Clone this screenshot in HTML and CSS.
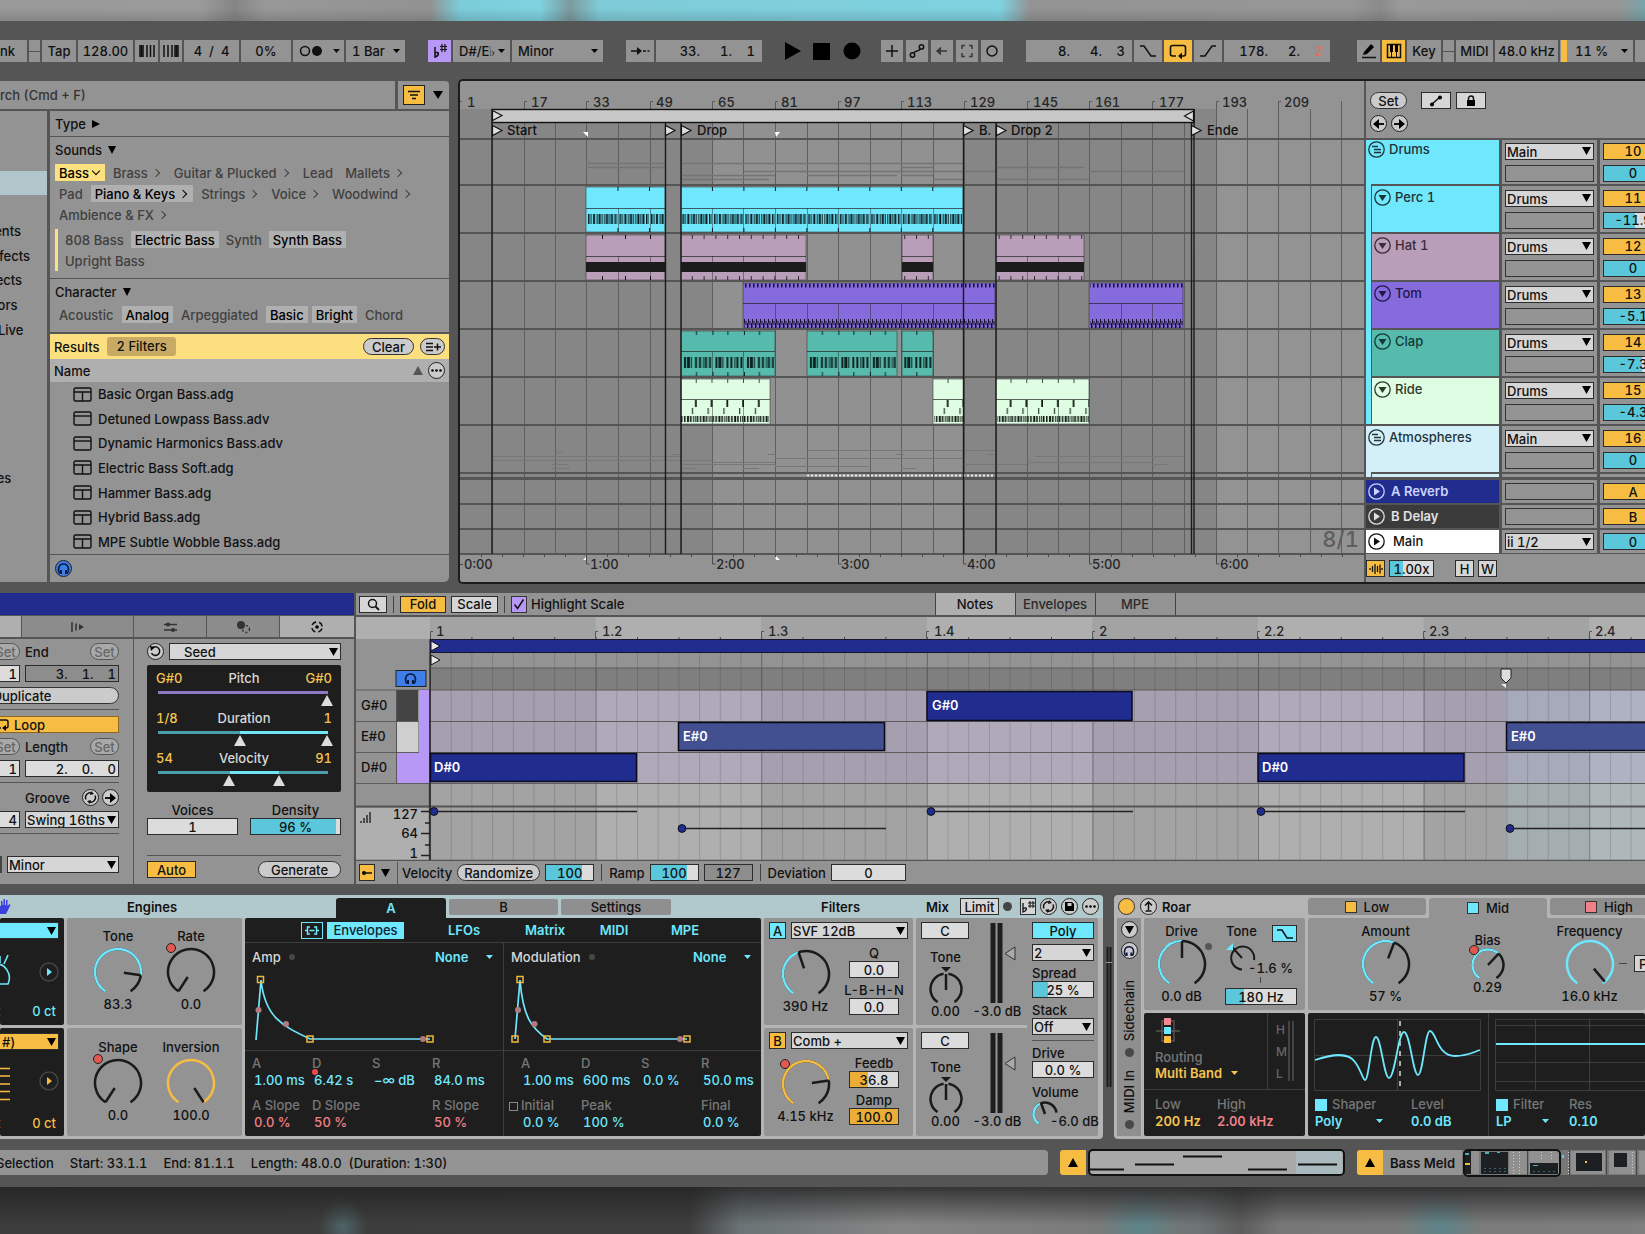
FILE: index.html
```html
<!DOCTYPE html>
<html lang="en">
<head>
<meta charset="utf-8">
<title>Live Set</title>
<link rel="stylesheet" href="styles.css">
</head>
<body>
<div class="glow-top"></div>
<main class="app">

<header class="transport">
  <div class="group">
    <button class="t cut-l w27">nk</button>
    <span class="t w11 link"></span>
    <button class="t w34">Tap</button>
    <input class="t w55" value="128.00" aria-label="Tempo">
    <button class="t w23" aria-label="Nudge down"><svg width="16" height="14"><path d="M1 1v12M4 1v12M8 1v12M11.500 1v12M15 1v12" stroke="#111" stroke-width="1.500"/><path d="M2.500 1v12" stroke="#111" stroke-width="2"/></svg></button>
    <button class="t w22" aria-label="Nudge up"><svg width="16" height="14"><path d="M1 1v12M5 1v12M9 1v12M12 1v12M15 1v12" stroke="#111" stroke-width="1.500"/><path d="M13.500 1v12" stroke="#111" stroke-width="2"/></svg></button>
    <input class="t w55" value="4  /  4" aria-label="Time signature">
    <input class="t w50" value="0%" aria-label="Groove amount">
    <button class="t w51" aria-label="Metronome"><svg width="43" height="14"><circle cx="8" cy="7" r="4.500" fill="none" stroke="#111" stroke-width="1.500"/><circle cx="20" cy="7" r="5" fill="#111"/><path d="M36 5h7l-3.500 4z" fill="#111"/></svg></button>
    <select class="t sel-s w59" aria-label="Quantization"><option>1 Bar</option></select>
  </div>
  <div class="group">
    <button class="t w23 violet" aria-label="Scale mode"><svg width="16" height="16"><path d="M3 4v10c5-2 4-6 0-4" fill="none" stroke="#111" stroke-width="1.500"/><path d="M10 1v8M13 1v8M8 3.500h7M8 6.500h7" stroke="#111" stroke-width="1.200"/></svg></button>
    <select class="t sel-s w57" aria-label="Root note"><option>D#/E♭</option></select>
    <select class="t sel-s w91" aria-label="Scale"><option>Minor</option></select>
  </div>
  <div class="group">
    <button class="t w28" aria-label="Follow"><svg width="20" height="12"><path d="M1 6h7M13 6h3M17.500 6h2" stroke="#111" stroke-width="1.500"/><path d="M7 2l5 4-5 4z" fill="#111"/></svg></button>
    <div class="t pos"><span>33.</span><span>1.</span><span>1</span></div>
  </div>
  <div class="play">
    <button aria-label="Play"><svg width="17" height="20"><path d="M1 1l16 9L1 19z"/></svg></button>
    <button aria-label="Stop"><svg width="18" height="18"><path d="M0 1h17v17H0z"/></svg></button>
    <button aria-label="Record"><svg width="18" height="18"><circle cx="9" cy="9" r="8.500"/></svg></button>
  </div>
  <div class="group g3">
    <button class="t w22" aria-label="Overdub"><svg width="14" height="14"><path d="M7 1v12M1 7h12" stroke="#111" stroke-width="1.500"/></svg></button>
    <button class="t w22" aria-label="Automation arm"><svg width="16" height="14"><g fill="none" stroke="#111" stroke-width="1.500"><circle cx="3.500" cy="11" r="2.200"/><circle cx="12.500" cy="3" r="2.200"/><path d="M5 9c1-3 5-1 6-4"/></g></svg></button>
    <button class="t w22" aria-label="Re-enable automation"><svg width="14" height="14"><path d="M2 7h10M6 3.500L2 7l4 3.500" fill="none" stroke="#3a3a3a" stroke-width="1.500"/><path d="M6 3v8L2 7z" fill="#3a3a3a"/></svg></button>
    <button class="t w22" aria-label="Capture"><svg width="14" height="14"><path d="M2 5V1.500h3M9 1.500h3V5M12 9v3.500H9M5 12.500H2V9" fill="none" stroke="#3a3a3a" stroke-width="1.500"/></svg></button>
    <button class="t w22" aria-label="Session record"><svg width="14" height="14"><circle cx="7" cy="7" r="5" fill="none" stroke="#111" stroke-width="1.500"/></svg></button>
  </div>
  <div class="group">
    <div class="t pos"><span>8.</span><span>4.</span><span>3</span></div>
    <button class="t w28" aria-label="Punch in"><svg width="18" height="14"><path d="M1 2h4l7 10h5" fill="none" stroke="#111" stroke-width="1.500"/></svg></button>
    <button class="t w28 amber" aria-label="Loop"><svg width="18" height="15"><path d="M7 12H3.500q-2 0-2-2V3.500q0-2 2-2h11q2 0 2 2V10q0 2-2 2H12" fill="none" stroke="#111" stroke-width="1.600"/><path d="M13 8.500v7L9 12z" fill="#111"/></svg></button>
    <button class="t w28" aria-label="Punch out"><svg width="18" height="14"><path d="M1 12h5L13 2h4" fill="none" stroke="#111" stroke-width="1.500"/></svg></button>
    <div class="t pos"><span>178.</span><span>2.</span><span class="red">2</span></div>
  </div>
  <div class="group last">
    <button class="t w23" aria-label="Draw"><svg width="16" height="16"><path d="M3 9l7-8 3 3-7 7-4 1z"/><path d="M1 14.500h14" stroke="#111" stroke-width="1.500"/></svg></button>
    <button class="t w23 amber" aria-label="Computer keyboard"><svg width="16" height="16"><path d="M1.500 1.500h13v13h-13z" fill="none" stroke="#111" stroke-width="1.500"/><path d="M5.500 2v12M10.500 2v12" stroke="#111"/><path d="M4 2h3v7H4zM9 2h3v7H9z"/></svg></button>
    <button class="t w34">Key</button>
    <span class="t w11 link"></span>
    <button class="t w37">MIDI</button>
    <button class="t w63">48.0 kHz</button>
    <select class="t sel-s w73 cpu" aria-label="CPU"><option>11 %</option></select>
    <span class="t w22"></span>
  </div>
</header>

<div class="upper">
<section class="browser">
  <div class="search">
    <input value="" placeholder="rch (Cmd + F)" aria-label="Search">
    <div class="filter-box">
      <button class="filter" aria-label="Filters"><svg width="14" height="12"><path d="M1 2.500h12M3 6h8M5 9.500h4" stroke="#111" stroke-width="1.600"/></svg></button>
      <svg width="10" height="8"><path d="M0 0h10L5 8z"/></svg>
    </div>
  </div>
  <div class="browser-body">
    <nav class="side">
      <div class="hl"></div>
      <ul><li>Instruments</li><li>Audio Effects</li><li>MIDI Effects</li><li>Modulators</li><li>Max for Live</li></ul>
      <ul class="u2"><li>Templates</li></ul>
    </nav>
    <div class="content">
      <h3 class="type">Type <svg width="8" height="8"><path d="M0 0l8 4-8 4z"/></svg></h3>
      <div class="tags">
        <h3>Sounds <svg width="8" height="8"><path d="M0 0h8L4 8z"/></svg></h3>
        <div class="row"><button class="yel">Bass<i class="dn"></i></button><button>Brass<i></i></button><button>Guitar &amp; Plucked<i></i></button><button>Lead</button><button>Mallets<i></i></button></div>
        <div class="row"><button>Pad</button><button class="on">Piano &amp; Keys<i></i></button><button>Strings<i></i></button><button>Voice<i></i></button><button>Woodwind<i></i></button></div>
        <div class="row"><button>Ambience &amp; FX<i></i></button></div>
        <div class="sub">
          <div class="row"><button>808 Bass</button><button class="on">Electric Bass</button><button>Synth</button><button class="on">Synth Bass</button></div>
          <div class="row"><button>Upright Bass</button></div>
        </div>
      </div>
      <div class="tags char">
        <h3>Character <svg width="8" height="8"><path d="M0 0h8L4 8z"/></svg></h3>
        <div class="row"><button>Acoustic</button><button class="on">Analog</button><button>Arpeggiated</button><button class="on">Basic</button><button class="on">Bright</button><button>Chord</button></div>
      </div>
      <div class="results"><span>Results</span><span class="count">2 Filters</span><button class="pill push w51">Clear</button><button class="pill w25" aria-label="Save filter"><svg width="16" height="10"><path d="M1 1.500h7M1 5h7M1 8.500h7M9 5h7M12.500 1.500v7" stroke="#111" stroke-width="1.500"/></svg></button></div>
      <div class="name"><span>Name</span><svg class="push" width="10" height="9"><path d="M0 9h10L5 0z" fill="#555"/></svg><button class="round" aria-label="Columns"><svg width="11" height="3"><circle cx="1.500" cy="1.500" r="1.300"/><circle cx="5.500" cy="1.500" r="1.300"/><circle cx="9.500" cy="1.500" r="1.300"/></svg></button></div>
      <ul class="files">
        <li><svg width="19" height="15"><use href="#rack"/></svg>Basic Organ Bass.adg</li>
        <li><svg width="19" height="15"><use href="#dev"/></svg>Detuned Lowpass Bass.adv</li>
        <li><svg width="19" height="15"><use href="#dev"/></svg>Dynamic Harmonics Bass.adv</li>
        <li><svg width="19" height="15"><use href="#rack"/></svg>Electric Bass Soft.adg</li>
        <li><svg width="19" height="15"><use href="#rack"/></svg>Hammer Bass.adg</li>
        <li><svg width="19" height="15"><use href="#rack"/></svg>Hybrid Bass.adg</li>
        <li><svg width="19" height="15"><use href="#rack"/></svg>MPE Subtle Wobble Bass.adg</li>
      </ul>
      <div class="preview"><button class="round blue" aria-label="Preview"><svg width="13" height="13"><use href="#phones"/></svg></button></div>
    </div>
  </div>
</section>

<section class="arr">
<svg class="timeline" width="904" height="501" viewBox="460 81 904 501">
  <defs>
    <g id="rack"><rect x="1" y="1" width="17" height="13" rx="1.500" fill="none" stroke="#111" stroke-width="1.400"/><path d="M1 5h17M9.500 5v9" stroke="#111" stroke-width="1.400"/></g>
    <g id="dev"><rect x="1" y="1" width="17" height="13" rx="1.500" fill="none" stroke="#111" stroke-width="1.400"/><path d="M1 5h17" stroke="#111" stroke-width="1.400"/></g>
    <g id="phones"><path d="M3 11.500C.500 9 1 2 6.500 2S12.500 9 10 11.500" fill="none" stroke="#0b1b3d" stroke-width="1.600"/><path d="M3 8h2v4H3zM8 8h2v4H8z" fill="#0b1b3d"/></g>
    <g id="loc"><path d="M.500.500v10L10 5.500z" fill="#ddd" stroke="#111" stroke-width="1.200"/></g>
    <pattern id="perc" patternUnits="userSpaceOnUse" x="586" y="0" width="31.480" height="600"><path d="M2 214h1.500v10H2zM4.500 214h1v10h-1zM7 214h2v10H7zM10.500 214h1v10h-1zM12.500 214h2v10h-2zM15.500 214h1v10h-1zM18 214h1v10h-1zM20 214h2v10h-2zM23 214h1v10h-1zM25 214h2v10h-2zM28.500 214h1v10h-1zM30 214h1v10h-1zM0 187h1v4H0zM0 228h1v4H0z" fill="#0a1c20"/></pattern>
    <pattern id="hat" patternUnits="userSpaceOnUse" x="681" y="0" width="11.800" height="600"><path d="M11 235h1v4h-1zM11 276h1v4h-1z" fill="#111"/></pattern>
    <pattern id="tom" patternUnits="userSpaceOnUse" x="743" y="0" width="4" height="600"><path d="M2 283.500h1.500v4H2zM1 319h1v4H1zM0 323h1.500v5H0zM2.500 321h1v4h-1z" fill="#15102c"/></pattern>
    <pattern id="clap" patternUnits="userSpaceOnUse" x="681" y="0" width="31.480" height="600"><path d="M3 357h2v11H3zM6 357h3v11H6zM10 357h1v11h-1zM14 357h2v11h-2zM18 357h2v11h-2zM22 357h1v11h-1zM24 357h2v11h-2zM28 357h2v11h-2zM15 331h1v4h-1zM0 331h1v4H0zM15 372h1v4h-1zM0 372h1v4H0z" fill="#0c2320"/></pattern>
    <pattern id="ride" patternUnits="userSpaceOnUse" x="681" y="0" width="15.740" height="600"><path d="M14 400h2v7h-2zM11 408h1v6h-1zM15 379h1v4h-1zM0 416h1.500v6H0zM3 416h1.500v6H3zM6 416h2v6H6zM9 416h1.500v6H9zM12 416h1v6h-1zM14 416h1v6h-1z" fill="#0d150e"/></pattern>
    <pattern id="dots" patternUnits="userSpaceOnUse" x="807" y="0" width="4" height="600"><path d="M0 474.500h2v2H0z" fill="#e2ecee"/></pattern>
  </defs>
  <rect x="460" y="81" width="904" height="501" fill="#939393"/>
  <rect x="460" y="109" width="252" height="444" fill="#868686"/><rect x="712" y="122" width="252" height="431" fill="#919191"/><rect x="964" y="109" width="252" height="444" fill="#868686"/>
  <path stroke="#5f5f5f" d="M492.500 122V553M524.500 122V553M555.500 122V553M586.500 122V553M618.500 122V553M650.500 122V553M681.500 122V553M712.500 122V553M743.500 122V553M775.500 122V553M807.500 122V553M838.500 122V553M870.500 122V553M901.500 122V553M933.500 122V553M964.500 122V553M996.500 122V553M1027.500 122V553M1058.500 122V553M1089.500 122V553M1121.500 122V553M1152.500 122V553M1184.500 122V553M1216.500 109V553M1247.500 109V553M1278.500 109V553M1310.500 109V553M1341.500 101V553"/>
  <path stroke="#5a5a5a" fill="none" d="M462 101.500h-2M527 101.500h-2.500V109M589 101.500h-2.500V109M653 101.500h-2.500V109M715 101.500h-2.500V109M778 101.500h-2.500V109M841 101.500h-2.500V109M904 101.500h-2.500V109M967 101.500h-2.500V109M1030 101.500h-2.500V109M1092 101.500h-2.500V109M1155 101.500h-2.500V109M1219 101.500h-2.500V109M1281 101.500h-2.500V109"/>
  <path stroke="#747474" stroke-width="1.500" d="M586 163.500h79M681 163.500h126M586 167.500h79M681 163.500h282M901 167.500h32M744 171.500h252M681 175.500h94M807 175.500h90M901 175.500h32M681 179.500h88M933 179.500h31M996 167.500h88M996 179.500h93M1089 171.500h95"/>
  <path stroke="#777" d="M492 456.500h190M492 460.500h220M555 452.500h8M552 464.500h16M552 468.500h18M681 464.500h95M681 468.500h15M712 462.500h63M775 458.500h190M807 450.500h188M775 466.500h94M964 464.500h63M1035 456.500h149M1027 462.500h125M1152 464.500h15M743 468.500h16M901 468.500h15M768 454.500h8M896 454.500h8M988 454.500h8M672 454.500h9"/>
  <g stroke="#3a3a3a" stroke-opacity=".6">
    <g fill="#6fe7fc"><rect x="586" y="187" width="79" height="45"/><rect x="681" y="187" width="282" height="45"/></g>
    <g fill="#b99eb9"><rect x="586" y="235" width="79" height="45"/><rect x="681" y="235" width="125" height="45"/><rect x="902" y="235" width="31" height="45"/><rect x="996" y="235" width="88" height="45"/></g>
    <g fill="#856bdb"><rect x="743" y="283" width="252" height="45"/><rect x="1089" y="283" width="94" height="45"/></g>
    <g fill="#56bbad"><rect x="681" y="331" width="94" height="45"/><rect x="807" y="331" width="90" height="45"/><rect x="902" y="331" width="31" height="45"/></g>
    <g fill="#dffde3"><rect x="681" y="379" width="89" height="45"/><rect x="933" y="379" width="31" height="45"/><rect x="996" y="379" width="93" height="45"/></g>
  </g>
  <path stroke="#222" stroke-opacity=".7" d="M586 208.500h79M681 208.500h282M586 256.500h79M681 256.500h125M902 256.500h31M996 256.500h88M743 303.500h252M1089 303.500h94M681 351.500h94M807 351.500h90M902 351.500h31M681 399.500h89M933 399.500h31M996 399.500h93"/>
  <path stroke="#222" stroke-opacity=".45" d="M618.500 208v24M650.500 208v24M712.500 208v24M743.500 208v24M775.500 208v24M807.500 208v24M838.500 208v24M870.500 208v24M901.500 208v24M933.500 208v24M618.500 256v24M650.500 256v24M712.500 256v24M743.500 256v24M775.500 256v24M1027.500 256v24M1058.500 256v24M775.500 304v24M807.500 304v24M838.500 304v24M870.500 304v24M901.500 304v24M933.500 304v24M1121.500 304v24M1152.500 304v24M712.500 352v24M743.500 352v24M838.500 352v24M870.500 352v24M712.500 400v24M743.500 400v24M1027.500 400v24M1058.500 400v24"/>
  <g fill="url(#perc)"><rect x="587" y="187" width="77" height="45"/><rect x="682" y="187" width="280" height="45"/></g>
  <path fill="#1c1c1c" d="M586 262h79v10h-79zM681 262h125v10H681zM902 262h31v10h-31zM996 262h88v10h-88z"/>
  <g fill="url(#hat)"><rect x="682" y="235" width="124" height="45"/><rect x="903" y="235" width="30" height="45"/><rect x="997" y="235" width="87" height="45"/></g>
  <path stroke="#111" d="M602.500 235v4M625.500 235v4M650.500 235v4M602.500 276v4M625.500 276v4M650.500 276v4"/>
  <g fill="url(#tom)"><rect x="744" y="283" width="251" height="45"/><rect x="1090" y="283" width="93" height="45"/></g>
  <g fill="url(#clap)"><rect x="682" y="331" width="92" height="45"/><rect x="808" y="331" width="88" height="45"/><rect x="903" y="331" width="30" height="45"/></g>
  <g fill="url(#ride)"><rect x="681" y="379" width="88" height="45"/><rect x="934" y="379" width="29" height="45"/><rect x="997" y="379" width="92" height="45"/></g>
  <path stroke="#555" stroke-width="2" d="M460 139h904M460 185h904M460 233h904M460 281h904M460 329h904M460 377h904M460 425h904M460 473h904M460 504h904M460 529h904M460 554h904"/>
  <path stroke="#555" stroke-width="3" d="M460 478.500h904"/>
  <rect x="807" y="474" width="188" height="4" fill="url(#dots)"/>
  <path stroke="#1a1a1a" stroke-width="1.400" d="M492 122V554M665.500 122V554M681 122V554M963.500 122V554M996 122V554M1191.500 109V554M1194 109V554"/>
  <rect x="492" y="109.500" width="702" height="13" fill="#c8c8c8" stroke="#111" stroke-width="1.400"/>
  <use href="#loc" x="492" y="110"/><path d="M1193.500 111v10l-9-5z" fill="#ddd" stroke="#111" stroke-width="1.200"/>
  <use href="#loc" x="492" y="125"/><use href="#loc" x="665" y="125"/><use href="#loc" x="681" y="125"/><use href="#loc" x="963" y="125"/><use href="#loc" x="996" y="125"/><use href="#loc" x="1191" y="125"/>
  <path fill="#fff" d="M583 132h5v5zM775 132h5l-4 5zM583 560l4-4v4zM775 555l5 5h-4z"/>
  <g class="bars"><text x="467" y="107">1</text><text x="531" y="107">17</text><text x="593" y="107">33</text><text x="656" y="107">49</text><text x="718" y="107">65</text><text x="781" y="107">81</text><text x="844" y="107">97</text><text x="907" y="107">113</text><text x="970" y="107">129</text><text x="1033" y="107">145</text><text x="1095" y="107">161</text><text x="1159" y="107">177</text><text x="1222" y="107">193</text><text x="1284" y="107">209</text></g>
  <g class="locs"><text x="507" y="135">Start</text><text x="697" y="135">Drop</text><text x="979" y="135">B.</text><text x="1011" y="135">Drop 2</text><text x="1207" y="135">Ende</text></g>
  <text class="zoomlabel" x="1359" y="547" text-anchor="end">8/1</text>
  <path stroke="#4a4a4a" fill="none" d="M460 564.500h3M586.500 554v10h3M712.500 554v10h3M838.500 554v10h3M963.500 554v10h3M1089.500 554v10h3M1216.500 554v10h3M481.500 554v3M502.500 554v3M523.500 554v3M544.500 554v3M565.500 554v3M607.500 554v3M628.500 554v3M649.500 554v3M670.500 554v3M691.500 554v3M733.500 554v3M754.500 554v3M775.500 554v3M796.500 554v3M817.500 554v3M859.500 554v3M880.500 554v3M901.500 554v3M922.500 554v3M943.500 554v3M985.500 554v3M1006.500 554v3M1027.500 554v3M1048.500 554v3M1069.500 554v3M1111.500 554v3M1132.500 554v3M1153.500 554v3M1174.500 554v3M1195.500 554v3M1237.500 554v3M1258.500 554v3M1279.500 554v3M1300.500 554v3M1321.500 554v3M1342.500 554v3"/>
  <g class="bars"><text x="464" y="569">0:00</text><text x="590" y="569">1:00</text><text x="716" y="569">2:00</text><text x="841" y="569">3:00</text><text x="967" y="569">4:00</text><text x="1092" y="569">5:00</text><text x="1220" y="569">6:00</text></g>
</svg>
<div class="heads">
  <div class="heads-top">
    <div class="line"><button class="pill w37">Set</button><button class="btn w30" aria-label="Automation mode"><svg width="14" height="12"><path d="M2 10L11 2" stroke="#111" stroke-width="1.500"/><circle cx="3" cy="9.500" r="2"/><circle cx="11" cy="2.500" r="2"/></svg></button><button class="btn w30" aria-label="Lock envelopes"><svg width="10" height="12"><path d="M1 5h8v6H1z"/><path d="M2.500 5V3.500a2.500 2.500 0 0 1 5 0V5" fill="none" stroke="#111" stroke-width="1.500"/></svg></button></div>
    <div class="line l2"><button class="round" aria-label="Previous locator"><svg width="11" height="10"><path d="M5 5h6" stroke="#111" stroke-width="2"/><path d="M6 0v10L0 5z"/></svg></button><button class="round" aria-label="Next locator"><svg width="11" height="10"><path d="M0 5h6" stroke="#111" stroke-width="2"/><path d="M5 0v10l6-5z"/></svg></button></div>
  </div>
  <div class="track first"><div class="tn c-cyan"><svg class="ic" width="17" height="17"><use href="#grp"/></svg>Drums</div><div class="io"><select class="sel" aria-label="Drums output"><option>Main</option></select><div class="slot"></div></div><div class="mx"><button class="btn amber">10</button><input class="num cy" value="0" aria-label="Drums volume"></div></div>
  <div class="track"><div class="tn child c-cyan"><svg class="ic" width="17" height="17"><use href="#fold"/></svg>Perc 1</div><div class="io"><select class="sel" aria-label="Perc 1 output"><option>Drums</option></select><div class="slot"></div></div><div class="mx"><button class="btn amber">11</button><input class="num" style="--f:53%" value="-11.9" aria-label="Perc 1 volume"></div></div>
  <div class="track"><div class="tn child c-mauve"><svg class="ic" width="17" height="17"><use href="#fold"/></svg>Hat 1</div><div class="io"><select class="sel" aria-label="Hat 1 output"><option>Drums</option></select><div class="slot"></div></div><div class="mx"><button class="btn amber">12</button><input class="num cy" value="0" aria-label="Hat 1 volume"></div></div>
  <div class="track"><div class="tn child c-purple"><svg class="ic" width="17" height="17"><use href="#fold"/></svg>Tom</div><div class="io"><select class="sel" aria-label="Tom output"><option>Drums</option></select><div class="slot"></div></div><div class="mx"><button class="btn amber">13</button><input class="num cy" value="-5.1" aria-label="Tom volume"></div></div>
  <div class="track"><div class="tn child c-teal"><svg class="ic" width="17" height="17"><use href="#fold"/></svg>Clap</div><div class="io"><select class="sel" aria-label="Clap output"><option>Drums</option></select><div class="slot"></div></div><div class="mx"><button class="btn amber">14</button><input class="num" style="--f:66%" value="-7.3" aria-label="Clap volume"></div></div>
  <div class="track"><div class="tn child c-mint"><svg class="ic" width="17" height="17"><use href="#fold"/></svg>Ride</div><div class="io"><select class="sel" aria-label="Ride output"><option>Drums</option></select><div class="slot"></div></div><div class="mx"><button class="btn amber">15</button><input class="num cy" value="-4.3" aria-label="Ride volume"></div></div>
  <div class="track"><div class="tn c-ice"><svg class="ic" width="17" height="17"><use href="#grp"/></svg>Atmospheres</div><div class="io"><select class="sel" aria-label="Atmospheres output"><option>Main</option></select><div class="slot"></div></div><div class="mx"><button class="btn amber">16</button><input class="num cy" value="0" aria-label="Atmospheres volume"></div></div>
  <div class="track sliver"><div class="tn child c-ice"></div><div class="io"></div><div class="mx"></div></div>
  <div class="track ret"><div class="tn c-blue"><svg class="ic" width="17" height="17"><use href="#unfold"/></svg>A Reverb</div><div class="io"><div class="slot"></div></div><div class="mx"><button class="btn amber">A</button></div></div>
  <div class="track ret"><div class="tn c-dark"><svg class="ic" width="17" height="17"><use href="#unfold"/></svg>B Delay</div><div class="io"><div class="slot"></div></div><div class="mx"><button class="btn amber">B</button></div></div>
  <div class="track ret"><div class="tn c-white"><svg class="ic" width="17" height="17"><use href="#unfold"/></svg>Main</div><div class="io"><select class="sel" aria-label="Main output"><option>ⅱ 1/2</option></select></div><div class="mx"><input class="num cy" value="0" aria-label="Main volume"></div></div>
  <div class="heads-foot"><button class="btn amber w19" aria-label="Waveform"><svg width="14" height="12"><path d="M1 5v2M3.500 3v6M6 1v10M8.500 3v6M11 1.500v9M13 5v2" stroke="#111" stroke-width="1.300"/></svg></button><input class="num w45" style="--f:30%" value="1.00x" aria-label="Waveform zoom"><button class="btn w19 hbtn">H</button><button class="btn w19">W</button></div>
  <svg width="0" height="0" class="defs"><g id="grp" fill="none" stroke="currentColor" stroke-width="1.300"><circle cx="8.500" cy="8.500" r="7.700"/><path d="M4 5.500h6M6 8.500h7M6 11.500h7"/></g><g id="fold"><circle cx="8.500" cy="8.500" r="7.700" fill="none" stroke="currentColor" stroke-width="1.300"/><path d="M4.500 6h8l-4 6z" fill="currentColor"/></g><g id="unfold"><circle cx="8.500" cy="8.500" r="7.700" fill="none" stroke="currentColor" stroke-width="1.300"/><path d="M6 4.500v8l6-4z" fill="currentColor"/></g></svg>
</div>
</section>
</div>

<div class="clipview">
<section class="props">
  <div class="cliptitle"></div>
  <div class="ptabs"><button class="sel-tab p1" aria-label="Clip"></button><button class="p2" aria-label="Launch"><svg width="14" height="12"><path d="M1 1v10M5 2.500v7" stroke="#333" stroke-width="1.500"/><path d="M8 3v6l5-3z" fill="#333"/></svg></button><button class="p3" aria-label="Pitch and time"><svg width="13" height="12"><path d="M0 3.500h13M0 9h13" stroke="#333" stroke-width="1.400"/><circle cx="4" cy="3.500" r="2" fill="#333"/><circle cx="9" cy="9" r="2" fill="#333"/></svg></button><button class="p3" aria-label="Transform"><svg width="14" height="14"><circle cx="5" cy="5" r="4" fill="#333"/><circle cx="10" cy="9" r="3.500" fill="none" stroke="#333" stroke-width="1.500" stroke-dasharray="2 2"/></svg></button><button class="p3 sel-tab" aria-label="Generate"><svg width="14" height="14"><circle cx="7" cy="7" r="1.800"/><circle cx="7" cy="7" r="5.200" fill="none" stroke="#111" stroke-width="1.600" stroke-dasharray="5 3.160" stroke-dashoffset="-1.600"/></svg></button></div>
  <div class="pbody">
    <div class="pcol">
      <div class="prow"><span class="cut"><button class="pill dim w29">Set</button></span><span>End</span><button class="pill dim w29 push">Set</button></div>
      <div class="prow r5"><span class="cut"><input class="num r" value="1" aria-label="Start"></span><input class="num r grey" value="3.    1.    1" aria-label="End"></div>
      <div class="prow r5"><button class="pill dup">Duplicate</button></div>
      <hr class="h1">
      <div class="prow"><button class="btn amber loopb"><svg width="14" height="13"><path d="M5 10H1M2 2h8q2 0 2 2v4q0 2-2 2h-1" fill="none" stroke="#111" stroke-width="1.500"/><path d="M10 7v6l-4-3z"/></svg>Loop</button></div>
      <div class="prow r5"><span class="cut"><button class="pill dim w29">Set</button></span><span>Length</span><button class="pill dim w29 push">Set</button></div>
      <div class="prow r5"><span class="cut"><input class="num r" value="1" aria-label="Position"></span><input class="num r" value="2.    0.    0" aria-label="Length"></div>
      <hr class="h1">
      <div class="prow"><span class="cut"></span><span>Groove</span><button class="round push" aria-label="Swap groove"><svg width="13" height="13"><use href="#swap"/></svg></button><button class="round" aria-label="Commit groove"><svg width="11" height="10"><path d="M0 5h6" stroke="#111" stroke-width="2"/><path d="M5 0v10l6-5z"/></svg></button></div>
      <div class="prow r5"><span class="cut"><input class="num r" value="4" aria-label="Signature"></span><select class="sel" aria-label="Groove"><option>Swing 16ths</option></select></div>
      <hr class="h1">
      <div class="prow last-row"><span class="stub"></span><select class="sel" aria-label="Clip scale"><option>Minor</option></select></div>
    </div>
    <div class="gcol">
      <div class="grow"><button class="round" aria-label="Refresh"><svg width="11" height="11"><path d="M2 2.500A4.300 4.300 0 1 1 1.500 7" fill="none" stroke="#111" stroke-width="1.500"/><path d="M0 0l5 1-4 4z"/></svg></button><select class="sel seed" aria-label="Generator"><option>Seed</option></select></div>
      <div class="gen">
        <div class="gl"><b>G#0</b><span>Pitch</span><b>G#0</b></div>
        <svg width="174" height="16"><path d="M2 3.500h170" stroke="#8f79c4" stroke-width="3"/><path d="M165 17h12l-6-11z" fill="#ddd"/></svg>
        <div class="gl"><b>1/8</b><span>Duration</span><b>1</b></div>
        <svg width="174" height="16"><path d="M2 3.500h82" stroke="#4a9eaa" stroke-width="3"/><path d="M84 3.500h88" stroke="#70e6f4" stroke-width="3"/><path d="M78 17h12l-6-11zM165 17h12l-6-11z" fill="#ddd"/></svg>
        <div class="gl"><b>54</b><span>Velocity</span><b>91</b></div>
        <svg width="174" height="16"><path d="M2 3.500h170" stroke="#4a9eaa" stroke-width="3"/><path d="M74 3.500h49" stroke="#70e6f4" stroke-width="3"/><path d="M67 17h12l-6-11zM117 17h12l-6-11z" fill="#ddd"/></svg>
      </div>
      <div class="vd"><label>Voices<input class="num" value="1"></label><label>Density<input class="num" style="--f:95%" value="96 %"></label></div>
      <hr>
      <div class="ag"><button class="btn amber w49">Auto</button><button class="pill push w83">Generate</button></div>
    </div>
  </div>
</section>
<section class="editor">
  <div class="etool">
    <button class="btn w28" aria-label="Find"><svg width="13" height="13"><circle cx="5.500" cy="5.500" r="4" fill="none" stroke="#111" stroke-width="1.500"/><path d="M8.500 8.500L12 12" stroke="#111" stroke-width="1.800"/></svg></button><i class="bar"></i><button class="btn amber w46">Fold</button><button class="btn w47 ml5">Scale</button><i class="bar"></i><label class="chk"><input type="checkbox" checked>Highlight Scale</label>
    <div class="etabs"><button class="sel-tab">Notes</button><button>Envelopes</button><button>MPE</button></div>
  </div>
  <div class="roll">
  <svg width="1289" height="244" viewBox="356 617 1289 244">
    <defs>
      <pattern id="beat" patternUnits="userSpaceOnUse" x="430" y="0" width="331.200" height="1000"><rect width="165.600" height="1000" fill="#a3a3a3"/><rect x="165.600" width="165.600" height="1000" fill="#afafaf"/></pattern>
      <pattern id="sub" patternUnits="userSpaceOnUse" x="430" y="0" width="20.700" height="1000"><rect width="1" height="1000" fill="#000" fill-opacity=".14"/></pattern>
      <pattern id="q" patternUnits="userSpaceOnUse" x="430" y="0" width="165.600" height="1000"><rect width="1" height="1000" fill="#000" fill-opacity=".2"/></pattern>
      <pattern id="rt" patternUnits="userSpaceOnUse" x="430" y="0" width="41.400" height="1000"><rect width="1" height="1000" fill="#444"/></pattern>
    </defs>
    <rect x="356" y="617" width="2600" height="244" fill="#939393"/>
    <rect x="356" y="617" width="74" height="22" fill="#afafaf"/><rect x="356" y="808" width="74" height="53" fill="#afafaf"/>
    <rect x="430" y="617" width="2600" height="22" fill="url(#beat)"/>
    <rect x="430" y="637" width="2600" height="2" fill="url(#rt)"/>
    <rect x="430" y="668" width="2600" height="22" fill="#7f7f7f"/>
    <rect x="430" y="690" width="2600" height="171" fill="url(#beat)"/>
    <rect x="430" y="690" width="2600" height="93" fill="#b08fe0" fill-opacity=".2"/>
    <rect x="1506" y="690" width="1200" height="171" fill="#a8d8e8" fill-opacity=".2"/>
    <rect x="430" y="653" width="2600" height="208" fill="url(#sub)"/><rect x="430" y="653" width="2600" height="208" fill="url(#q)"/>
    <path stroke="#5c5c5c" d="M430 668h2600M356 690h2600M356 721.500h2600M356 752.500h2600M356 783.500h2600"/>
    <path stroke="#555" stroke-width="2" d="M356 806.500h2600"/><path stroke="#555" stroke-width="1.500" d="M356 860.500h2600M429.500 690v170"/>
    <rect x="430" y="639.500" width="2600" height="13" fill="#212c8f" stroke="#15152c"/>
    <path stroke="#222" stroke-width="1.300" d="M430 653v154M430 807v53"/>
    <path d="M431 641v10l9-5zM431 655v10l9-5z" fill="#e6e6e6" stroke="#111"/>
    <rect x="396" y="690" width="22" height="31" fill="#444"/><rect x="396" y="722" width="22" height="30" fill="#cfcfcf"/><rect x="419" y="690" width="10" height="63" fill="#b898f7"/><rect x="396" y="753" width="33" height="30" fill="#b898f7"/>
    <path stroke="#555" d="M396.500 690v93"/>
    <rect x="396" y="670.500" width="30" height="16" fill="#3f7de8" stroke="#222"/><use href="#phones" x="404" y="672"/>
    <g class="keys"><text x="361" y="710">G#0</text><text x="361" y="741">E#0</text><text x="361" y="772">D#0</text></g>
    <g stroke="#0a0a18" stroke-width="1.500"><g fill="#212c8f"><rect x="430.500" y="753.500" width="206" height="28"/><rect x="927" y="691.500" width="205" height="29"/><rect x="1258" y="753.500" width="206" height="28"/></g><g fill="#424f91"><rect x="678.500" y="722.500" width="206" height="28"/><rect x="1506.500" y="722.500" width="1206" height="28"/></g></g>
    <g class="notes"><text x="434" y="772">D#0</text><text x="683" y="741">E#0</text><text x="932" y="710">G#0</text><text x="1262" y="772">D#0</text><text x="1511" y="741">E#0</text></g>
    <path stroke="#222" stroke-width="1.400" d="M434 811.500h203M682 828.500h204M931 811.500h202M1261 811.500h204M1510 828.500h1200"/>
    <g fill="#212c8f" stroke="#111"><circle cx="434" cy="811.500" r="3.900"/><circle cx="682" cy="828.500" r="3.900"/><circle cx="931" cy="811.500" r="3.900"/><circle cx="1261" cy="811.500" r="3.900"/><circle cx="1510" cy="828.500" r="3.900"/></g>
    <path stroke="#222" stroke-width="1.400" d="M421 811.500h9M425 823h5M421 833.500h9M425 845h5M421 855.500h9M361 821v2M364 818v5M367 815v8M370 812v11"/>
    <g class="keys" text-anchor="end"><text x="418" y="819">127</text><text x="418" y="838">64</text><text x="418" y="858">1</text></g>
    <path d="M1501 669h10v9l-5 5-5-5z" fill="#ddd" stroke="#222"/><path d="M1501 684h5v4z" fill="#eee"/>
    <path fill="none" stroke="#555" d="M433 631.500h-2.500v7M598 631.500h-2.500v7M764 631.500h-2.500v7M929 631.500h-2.500v7M1095 631.500h-2.500v7M1260 631.500h-2.500v7M1426 631.500h-2.500v7M1592 631.500h-2.500v7"/>
    <g class="bars"><text x="436" y="636">1</text><text x="602" y="636">1.2</text><text x="768" y="636">1.3</text><text x="934" y="636">1.4</text><text x="1099" y="636">2</text><text x="1264" y="636">2.2</text><text x="1429" y="636">2.3</text><text x="1595" y="636">2.4</text></g>
  </svg>
  </div>
  <div class="vtool">
    <button class="btn amber w16" aria-label="Velocity lane"><svg width="12" height="6"><circle cx="3" cy="3" r="2"/><path d="M3 3h8" stroke="#111" stroke-width="1.500"/></svg></button><svg class="tri" width="9" height="8"><path d="M0 0h9L4.500 8z"/></svg><span class="vl">Velocity</span><button class="pill w83 ml5">Randomize</button><input class="num w49 ml5" style="--f:77%" value="100" aria-label="Randomize amount"><i class="bar"></i><span>Ramp</span><input class="num w49 ml5" style="--f:77%" value="100" aria-label="Ramp start"><input class="num grey w49 ml5" value="127" aria-label="Ramp end"><i class="bar"></i><label for="dev-in">Deviation</label><input id="dev-in" class="num w75 ml5" value="0">
  </div>
</section>
</div>

<div class="devices">
<section class="device meld">
  <header>
    <svg class="hand" width="11" height="15"><path d="M0 7l1 0V2h1.500v4h1V0H5v6h1V1h1.500v6l2-2 1 1-3 6-1.500 3H0z" fill="#3a3fe0"/></svg>
    <h4 class="h-eng">Engines</h4>
    <button class="tabA">A</button><button class="tabg w109">B</button><button class="tabg w110">Settings</button>
    <h4 class="h-fil">Filters</h4><h4 class="h-mix">Mix</h4><button class="btn w39 lim">Limit</button><i class="led"></i>
    <button class="btn w16" aria-label="Use scale"><svg width="14" height="14"><path d="M2 3v9c5-2 4-6 0-3" fill="none" stroke="#111" stroke-width="1.300"/><path d="M9 1v7M12 1v7M7 3h7M7 6h7" stroke="#111"/></svg></button><button class="round" aria-label="Hot-swap"><svg width="13" height="13"><use href="#swap"/></svg></button><button class="round" aria-label="Save preset"><svg width="11" height="11"><path d="M1 1h7l2 2v7H1z"/><path d="M3.500 2h4v3h-4z" fill="#ccc"/></svg></button><button class="round" aria-label="Options"><svg width="11" height="3"><circle cx="1.500" cy="1.500" r="1.300"/><circle cx="5.500" cy="1.500" r="1.300"/><circle cx="9.500" cy="1.500" r="1.300"/></svg></button>
  </header>
  <div class="dbody">
    <div class="col c1">
      <div class="blk eng"><select class="sel cysel" aria-label="Engine A"><option></option></select><svg width="64" height="50" viewBox="0 950 64 50"><path d="M4 963l4-9M0 962v-7M-5 963a13 14 0 0 1 13 20h-12" fill="none" stroke="#6fe7fc" stroke-width="1.600"/><circle cx="49" cy="971" r="9" fill="none" stroke="#444" stroke-width="1.500"/><path d="M47 967v8l5-4z" fill="#6fe7fc"/></svg><div class="ct cyan"><span>st</span><span>0 ct</span></div></div>
      <div class="blk eng e2"><select class="sel orsel" aria-label="Engine B"><option>#)</option></select><svg width="64" height="50" viewBox="0 1060 64 50"><path d="M-1 1068.500h11M-1 1076h11M-1 1084h11M-1 1091.500h11M-1 1099.500h11" stroke="#f6bd42" stroke-width="1.500"/><circle cx="49" cy="1081" r="9" fill="none" stroke="#444" stroke-width="1.500"/><path d="M47 1077v8l5-4z" fill="#f6bd42"/></svg><div class="ct amb"><span>st</span><span>0 ct</span></div></div>
    </div>
    <div class="col c2">
      <div class="pan kn"><div class="knob"><span>Tone</span><svg viewBox="-25 -25 50 49"><circle r="23" pathLength="360" stroke-dasharray="294 360"/><circle class="v" r="23" pathLength="360" stroke-dasharray="245 360"/><path d="M6 0H23" transform="rotate(8)"/></svg><span>83.3</span></div><div class="knob mod"><span>Rate</span><svg viewBox="-25 -25 50 49"><circle r="23" pathLength="360" stroke-dasharray="294 360"/><path d="M6 0H23" transform="rotate(123)"/></svg><span>0.0</span></div></div>
      <div class="pan kn k2"><div class="knob mod"><span>Shape</span><svg viewBox="-25 -25 50 49"><circle r="23" pathLength="360" stroke-dasharray="294 360"/><path d="M6 0H23" transform="rotate(123)"/></svg><span>0.0</span></div><div class="knob"><span>Inversion</span><svg viewBox="-25 -25 50 49"><circle class="v o" r="23" pathLength="360" stroke-dasharray="294 360"/><path d="M6 0H23" transform="rotate(57)"/></svg><span>100.0</span></div></div>
    </div>
    <div class="blk c3">
      <nav class="mtabs"><button class="ic-l" aria-label="Link"><svg width="16" height="9"><path d="M6 1H3.500v7H6M10 1h2.500v7H10M1 4.500h3M5.500 4.500h5M12 4.500h3" fill="none" stroke="#6fe7fc" stroke-width="1.500"/></svg></button><button class="act">Envelopes</button><button class="mt1">LFOs</button><button>Matrix</button><button>MIDI</button><button>MPE</button></nav>
      <div class="envs">
        <div class="env">
          <div class="eh"><span>Amp</span><i class="led2"></i><select class="dd" aria-label="Amp loop"><option>None</option></select></div>
          <svg width="258" height="85" viewBox="245 965 258 85"><path d="M256 1040l5-60c4 38 22 46 49 59h120" fill="none" stroke="#6fe7fc" stroke-width="1.700"/><g fill="#b07a80"><circle cx="258.500" cy="1010" r="3"/><circle cx="286" cy="1024" r="3"/><circle cx="423" cy="1039" r="3"/></g><path d="M257.500 976.500h6v6h-6zM307 1036h6v6h-6zM427 1036h6v6h-6z" fill="none" stroke="#f0b840" stroke-width="1.500"/></svg>
          <dl class="prm"><div><dt>A</dt><dd>1.00 ms</dd></div><div class="md"><dt>D</dt><dd>6.42 s</dd></div><div><dt>S</dt><dd>−∞ dB</dd></div><div><dt>R</dt><dd>84.0 ms</dd></div><div><dt>A Slope</dt><dd class="pk">0.0 %</dd></div><div><dt>D Slope</dt><dd class="pk">50 %</dd></div><div></div><div><dt>R Slope</dt><dd class="pk">50 %</dd></div></dl>
        </div>
        <div class="env e-b">
          <div class="eh"><span>Modulation</span><i class="led2"></i><select class="dd" aria-label="Modulation loop"><option>None</option></select></div>
          <svg width="257" height="85" viewBox="504 965 257 85"><path d="M515 1039l5-59c3 38 12 48 27 59h140" fill="none" stroke="#6fe7fc" stroke-width="1.700"/><g fill="#b07a80"><circle cx="518" cy="1010" r="3"/><circle cx="534.500" cy="1024" r="3"/><circle cx="680" cy="1039" r="3"/></g><path d="M512 1036h6v6h-6zM517 976.500h6v6h-6zM544 1036h6v6h-6zM684 1036h6v6h-6z" fill="none" stroke="#f0b840" stroke-width="1.500"/></svg>
          <dl class="prm p-b"><div><dt>A</dt><dd>1.00 ms</dd></div><div><dt>D</dt><dd>600 ms</dd></div><div><dt>S</dt><dd>0.0 %</dd></div><div><dt>R</dt><dd>50.0 ms</dd></div><div class="ini"><dt>Initial</dt><dd>0.0 %</dd></div><div><dt>Peak</dt><dd>100 %</dd></div><div></div><div><dt>Final</dt><dd>0.0 %</dd></div></dl>
        </div>
      </div>
    </div>
    <div class="col c4">
      <div class="pan fil"><div class="ft"><button class="btn cybtn w17">A</button><select class="sel" aria-label="Filter A"><option>SVF 12dB</option></select></div><div class="fk"><div class="knob"><svg viewBox="-25 -25 50 49"><circle r="23" pathLength="360" stroke-dasharray="294 360"/><circle class="v" r="23" pathLength="360" stroke-dasharray="128 360"/><path d="M6 0H23" transform="rotate(251)"/></svg><span>390 Hz</span></div><div class="fn"><label>Q<input class="num" value="0.0"></label><label>L-B-H-N<input class="num" value="0.0"></label></div></div></div>
      <div class="pan fil"><div class="ft"><button class="btn amber w17">B</button><select class="sel" aria-label="Filter B"><option>Comb +</option></select></div><div class="fk"><div class="knob mod m2"><svg viewBox="-25 -25 50 49"><circle r="23" pathLength="360" stroke-dasharray="294 360"/><circle class="v o" r="23" pathLength="360" stroke-dasharray="228 360"/><path d="M6 0H23" transform="rotate(351)"/></svg><span>4.15 kHz</span></div><div class="fn"><label>Feedb<input class="num or" style="--f:37%" value="36.8"></label><label>Damp<input class="num or" style="--f:100%" value="100.0"></label></div></div></div>
    </div>
    <div class="col c5">
      <div class="pan mix"><div class="ml"><input class="num" value="C" aria-label="Pan A"><div class="knob sm"><span>Tone</span><svg viewBox="-20 -24 40 38"><circle r="15.500" pathLength="360" stroke-dasharray="138 18 138 360"/><path d="M0-15V1"/><path d="M-5-22H5L0-17z" class="f"/></svg><span>0.00</span></div></div><div class="mr"><svg width="40" height="81"><path d="M16 0v80M23 0v80" stroke="#1e1e1e" stroke-width="5"/><path d="M38 24v13l-10-6.500z" fill="#aaa" stroke="#333"/></svg><span>-3.0 dB</span></div></div>
      <div class="pan mix"><div class="ml"><input class="num" value="C" aria-label="Pan B"><div class="knob sm"><span>Tone</span><svg viewBox="-20 -24 40 38"><circle r="15.500" pathLength="360" stroke-dasharray="138 18 138 360"/><path d="M0-15V1"/><path d="M-5-22H5L0-17z" class="f"/></svg><span>0.00</span></div></div><div class="mr"><svg width="40" height="81"><path d="M16 0v80M23 0v80" stroke="#1e1e1e" stroke-width="5"/><path d="M38 24v13l-10-6.500z" fill="#aaa" stroke="#333"/></svg><span>-3.0 dB</span></div></div>
    </div>
    <div class="pan c6">
      <button class="btn cybtn">Poly</button><select class="sel" aria-label="Voices count"><option>2</option></select>
      <label>Spread<input class="num" style="--f:25%" value="25 %"></label>
      <label>Stack<select class="sel"><option>Off</option></select></label><hr>
      <label>Drive<input class="num" value="0.0 %"></label>
      <div class="vol"><span>Volume</span><div><svg width="28" height="28" viewBox="-13 -13 28 28"><circle r="11.500" pathLength="360" stroke-dasharray="230 360"/><circle class="v" r="11.500" pathLength="360" stroke-dasharray="125 360"/><path d="M0 0H12" transform="rotate(250)"/></svg><span>-6.0 dB</span></div></div>
    </div>
  </div>
</section>
<svg class="meter" width="6" height="140"><path d="M1.500 0v140M4.500 0v140" stroke="#1c1c1c" stroke-width="2"/><path d="M0 15.500h6" stroke="#999"/></svg>
<section class="device roar">
  <header><div class="rt"><i class="power"></i><button class="round" aria-label="Expand"><svg width="11" height="11"><path d="M5.500 9V2M2 4.500L5.500 1 9 4.500M2.500 10h6" fill="none" stroke="#111" stroke-width="1.500"/></svg></button><h4>Roar</h4></div><button class="rtab"><i class="sq a"></i>Low</button><button class="rtab cur"><i class="sq c"></i>Mid</button><button class="rtab"><i class="sq p"></i>High</button></header>
  <div class="dbody">
    <div class="strip"><button class="round" aria-label="Collapse"><svg width="9" height="9"><path d="M0 1h9L4.500 9z"/></svg></button><button class="round" aria-label="Listen"><svg width="12" height="12" viewBox="0 0 13 13"><use href="#phones"/></svg></button><span class="vt vt1">Sidechain</span><i class="led2"></i><span class="vt vt2">MIDI In</span><i class="led2"></i></div>
    <div class="col r1">
      <div class="pan rd">
        <div class="knob"><span>Drive</span><svg viewBox="-25 -25 50 49"><circle r="23" pathLength="360" stroke-dasharray="294 360"/><circle class="v" r="23" pathLength="360" stroke-dasharray="147 360"/><path d="M6 0H23" transform="rotate(270)"/></svg><span>0.0 dB</span><i class="ddot"></i></div>
        <div class="tn2"><div class="tt"><span>Tone</span><button class="cybtn btn w25" aria-label="Tone curve"><svg width="16" height="12"><path d="M0 2h5l5 8h6" fill="none" stroke="#111" stroke-width="1.500"/></svg></button></div><svg width="72" height="46" viewBox="1225 942 72 46"><g fill="none" stroke="#1a1a1a" stroke-width="2"><path d="M1254 959A11.500 11.500 0 1 0 1242 968.500M1232 946l10 11" transform="translate(0 1)"/></g><path d="M1226 950l7-7v7z" fill="#6fe7fc"/><path d="M1260.500 977v6" stroke="#444"/><text x="1248" y="973">-1.6 %</text></svg><input class="num" style="--f:26%" value="180 Hz" aria-label="Tone frequency"></div>
      </div>
      <div class="blk rb">
        <div class="rr"><div class="rl"><svg width="26" height="30"><path d="M1 14h24M7 4h12v20H7z" fill="none" stroke="#555" stroke-width="1.500"/><path d="M9 1h7v7H9z" fill="#f28a90"/><path d="M9 10h7v7H9z" fill="#6fe7fc"/><path d="M9 19h7v7H9z" fill="#f6bd42"/></svg><span class="g">Routing</span><select class="dd y" aria-label="Routing"><option>Multi Band</option></select></div><div class="hml"><span>H</span><span>M</span><span>L</span></div></div>
        <dl class="lh"><div><dt>Low</dt><dd class="y">200 Hz</dd></div><div><dt>High</dt><dd class="pk">2.00 kHz</dd></div></dl>
      </div>
    </div>
    <div class="col r2">
      <div class="pan bd">
        <div class="knob k-a"><span>Amount</span><svg viewBox="-25 -25 50 49"><circle r="23" pathLength="360" stroke-dasharray="294 360"/><circle class="v" r="23" pathLength="360" stroke-dasharray="168 360"/><path d="M6 0H23" transform="rotate(291)"/></svg><span>57 %</span></div>
        <div class="knob sm k-b mod m3"><span>Bias</span><svg viewBox="-20 -17 40 31"><circle r="15.500" pathLength="360" stroke-dasharray="294 360"/><circle class="v" r="15.500" pathLength="360" stroke-dasharray="190 360"/><path d="M0 0H16" transform="rotate(313)"/></svg><span>0.29</span></div>
        <div class="knob k-a"><span>Frequency</span><svg viewBox="-25 -25 50 49"><circle class="v" r="23" pathLength="360" stroke-dasharray="294 360"/><path d="M6 0H23" transform="rotate(50)"/></svg><span>16.0 kHz</span></div>
        <i class="dash"></i><button class="btn pbtn">P</button>
      </div>
      <div class="blk bb">
        <div class="sh"><svg width="180" height="84" viewBox="1308 1013 180 84"><path d="M1314.500 1019.500h166v71h-166zM1314 1055.500h166M1397.500 1020v70" fill="none" stroke="#3d3d3d"/><path d="M1400 1021v69" stroke="#ddd" stroke-width="1.500" stroke-dasharray="5 5"/><path d="M1315 1060c18-6 33-8 40 2 6 8 8 18 10 18 4 0 6-43 11-43s8 41 13 41c6 0 9-46 15-46s9 43 14 43 7-44 12-44c6 0 7 25 25 25 12 0 19-4 25-6" fill="none" stroke="#6fe7fc" stroke-width="1.800"/></svg>
          <dl class="lh s1"><div class="chk2"><dt>Shaper</dt><dd><select class="dd c" aria-label="Shaper type"><option>Poly</option></select></dd></div><div><dt>Level</dt><dd>0.0 dB</dd></div></dl></div>
        <div class="fi"><svg width="157" height="84" viewBox="1489 1013 157 84"><path d="M1700 1019.500h-204.500v71H1700M1496 1025.500h200M1496 1062.500h200M1496 1081.500h200M1535.500 1020v70M1589.500 1020v70" fill="none" stroke="#3d3d3d"/><path d="M1496 1044h200" stroke="#6fe7fc" stroke-width="2"/></svg>
          <dl class="lh s2"><div class="chk2"><dt>Filter</dt><dd><select class="dd c" aria-label="Filter type"><option>LP</option></select></dd></div><div><dt>Res</dt><dd>0.10</dd></div></dl></div>
      </div>
    </div>
  </div>
</section>
</div>

<footer class="status">
  <div class="info"><span class="s0">Selection</span><span>Start: 33.1.1</span><span>End: 81.1.1</span><span>Length: 48.0.0&nbsp; (Duration: 1:30)</span></div>
  <button class="up" aria-label="Show clip view"><svg width="10" height="9"><path d="M0 9h10L5 0z"/></svg></button>
  <div class="over"><svg width="252" height="23"><rect x="206" width="46" height="23" fill="#a9b9bd"/><path stroke="#111" stroke-width="2" d="M0 18.500h34M45 13.500h39M93 5.500h39M158 18.500h39M208 13.500h39"/></svg></div>
  <button class="up" aria-label="Show device view"><svg width="10" height="9"><path d="M0 9h10L5 0z"/></svg></button>
  <span class="bm">Bass Meld</span>
  <svg class="chain" width="184" height="28" viewBox="1461 1149 184 28"><rect x="1461" y="1150" width="184" height="25" fill="#777"/><path fill="#909090" d="M1470 1151h8v23h-8zM1508 1151h18v23h-18zM1528 1151h30v23h-30zM1570 1151h34v23h-34zM1608 1151h26v23h-26zM1638 1151h8v23h-8z"/><path fill="#1c2022" d="M1464 1151h6v23h-6zM1480 1152h27v22h-27zM1529 1163h28v11h-28zM1575 1153h26v18h-26zM1613 1153h13v14h-13z"/><path fill="#6fe7fc" d="M1464 1153h4v2h-4zM1484 1152h4v2h-4zM1496 1152h3v1h-3zM1532 1165h5v1h-5zM1561 1155h2v3h-2z" opacity=".7"/><path fill="#f6bd42" d="M1464 1163h5v2h-5zM1584 1161h2v2h-2z"/><path stroke="#5ab" stroke-opacity=".5" stroke-dasharray="2 3" d="M1483 1168.500h22M1483 1171.500h22M1532 1171.500h22"/><path stroke="#ccc" stroke-dasharray="1 2" d="M1512.500 1152v22M1518.500 1152v22M1540.500 1152v8M1550.500 1152v8M1567.500 1152v22M1631.500 1152v22"/><path stroke="#444" d="M1526.500 1150v25M1568.500 1150v25M1605.500 1150v25M1635.500 1150v25"/><rect x="1463" y="1150" width="96" height="26" rx="4" fill="none" stroke="#111" stroke-width="2"/></svg>
</footer>
</main>
<div class="glow-bottom"></div>
<svg width="0" height="0" class="defs"><g id="swap" fill="none" stroke="#111" stroke-width="1.500"><path d="M2 8.500A4.600 4.600 0 0 1 8 2.300M11 4.500A4.600 4.600 0 0 1 5 10.700"/><path d="M7 0l3 3-4 1zM6 13l-3-3 4-1z" fill="#111" stroke="none"/></g></svg>
</body>
</html>
```

FILE: styles.css
```css
:root { --grey:#939393; --frame:#555; --amber:#f6bd42; --cyan:#6fe7fc; --fill:#5ac8da; --ink:#111; --black:#1e1e1e; }
* { box-sizing:border-box; }
body { margin:0; min-height:100vh; display:flex; flex-direction:column; background:#3a3a3a; font:500 13px/16px Inter,"Liberation Sans",sans-serif; font-variant-numeric:tabular-nums; color:var(--ink); overflow-x:hidden; }
button,input,select { font:inherit; font-variant-numeric:inherit; color:inherit; margin:0; padding:0; border:0; border-radius:0; background:none; min-width:0; }
button { display:flex; align-items:center; justify-content:center; white-space:nowrap; flex:none; }
select { appearance:none; }
h3,h4,ul,dl,dd { margin:0; padding:0; font:inherit; font-variant-numeric:inherit; list-style:none; }
svg { flex:none; display:block; }
text { font-family:Inter,"Liberation Sans",sans-serif; font-weight:500; font-size:13px; fill:#111; }
hr { border:0; border-top:1px solid #555; margin:0; width:100%; }
.push { margin-left:auto; }
.defs { position:absolute; }

.glow-top { height:21px; background:linear-gradient(#0000 40%,#0002),linear-gradient(90deg,#999 0,#9b9b9b 200px,#858585 235px,#989898 265px,#929292 430px,#7cccd9 460px,#7fd2e0 540px,#7c9a9d 570px,#7fcbd8 600px,#7fd2e0 1000px,#939393 1030px,#979797 1350px,#8b8b8b 1380px,#999 1400px,#969696 1620px,#74a4aa 1645px); }
.glow-bottom { flex:1; min-height:47px; background:linear-gradient(#222c,#0000 80%),radial-gradient(24px 30px at 343px 40px,#4f6468,#0000),radial-gradient(40px 40px at 1140px 40px,#5c8489,#0000),radial-gradient(40px 40px at 1440px 40px,#5c8489,#0000),linear-gradient(90deg,#3c3c3c 0,#3e3e3e 690px,#6a7375 740px,#858585 900px,#7b7b7b 1080px,#6e7475 1200px,#5c5c5c 1240px,#777 1280px,#7e7e7e 1645px); }
.app { background:var(--frame); padding:19px 0 12px; overflow:hidden; }

.transport { display:flex; height:22px; gap:23px; }
.group { display:flex; gap:2px; flex:none; }
.g3 { gap:3px; margin-left:-3px; }
.group.last { margin-left:4px; }
.t { height:22px; background:var(--grey); flex:none; display:flex; align-items:center; justify-content:center; text-align:center; }
.w11{width:11px}.w16{width:16px}.w17{width:17px}.w19{width:19px}.w22{width:22px}.w23{width:23px}.w25{width:25px}.w27{width:27px}.w28{width:28px}.w29{width:29px}.w30{width:30px}.w34{width:34px}.w37{width:37px}.w39{width:39px}.w45{width:45px}.w46{width:46px}.w47{width:47px}.w49{width:49px}.w50{width:50px}.w51{width:51px}.w55{width:55px}.w57{width:57px}.w59{width:59px}.w63{width:63px}.w73{width:73px}.w75{width:75px}.w83{width:83px}.w91{width:91px}.w109{width:109px}.w110{width:110px}
.cut-l { justify-content:flex-start; }
.link { background:linear-gradient(#555,#555) 0 50%/100% 1px no-repeat var(--grey); }
.violet { background:#b898f7; }
.amber { background:var(--amber); }
.sel-s { display:block; text-align:left; padding:0 14px 0 6px; background:url("data:image/svg+xml,%3Csvg xmlns='http://www.w3.org/2000/svg' width='7' height='4'%3E%3Cpath d='M0 0h7L3.5 4z'/%3E%3C/svg%3E") right 5px center no-repeat var(--grey); }
.cpu { padding-left:15px; box-shadow:inset 1px 0 var(--grey),inset 7px 0 var(--amber); }
.pos { width:106px; justify-content:flex-end; padding-right:7px; }
.pos span { width:32px; text-align:right; }
.pos span:last-child { width:23px; }
.red { color:#e0725c; }
.play { display:flex; align-items:center; width:77px; justify-content:space-between; margin-left:-1px; flex:none; }

.upper { display:flex; margin-top:17px; height:505px; }
.browser { width:449px; margin:2px 9px 2px 0; display:flex; flex-direction:column; gap:2px; flex:none; }
.search { display:flex; height:28px; gap:3px; }
.search input { width:395px; background:var(--grey); }
.search input::placeholder { color:#333; opacity:1; }
.filter-box { flex:1; background:var(--grey); border-radius:0 4px 0 0; display:flex; align-items:center; gap:8px; padding-left:5px; }
.filter { width:22px; height:20px; background:var(--amber); border:1px solid #222; }
.browser-body { display:flex; gap:3px; flex:1; }
.side { width:47px; background:var(--grey); }
.hl { height:24px; margin-top:60px; background:#b0c6ca; }
.side ul { margin:24px 0 0 -53px; display:grid; height:123px; }
.side li { white-space:nowrap; align-self:center; }
.side .u2 { height:24px; margin-top:124px; }
.content { flex:1; background:var(--grey); border-radius:0 0 5px 0; min-width:0; }
.content h3 { padding-left:5px; display:flex; align-items:center; gap:6px; }
.type { height:26px; border-bottom:1px solid #555; }
.tags { height:142px; padding-top:5px; border-bottom:1px solid #555; }
.row { display:flex; gap:4px; margin:3px 0 0 5px; height:18px; }
.tags h3 { margin-bottom:6px; }
.row button { padding:0 4px; height:17px; color:#404040; }
.row .on { background:#b0b0b0; color:#000; }
.row .yel { background:#fde17f; color:#000; }
.row i { width:6px; height:6px; border:solid; border-width:1px 1px 0 0; transform:rotate(45deg); margin:0 3px 0 5px; }
.row .dn { transform:rotate(135deg); margin:0 2px 4px 4px; }
.sub { border-left:3px solid #fbe08a; margin:5px 0 0 5px; height:42px; }
.sub .row { margin-left:3px; gap:3px; }
.sub .row:first-child { padding-top:2px; height:20px; margin-top:0; }
.char { height:55px; overflow:hidden; border-bottom:2px solid #555; padding-top:5px; }
.results { height:25px; background:#fcdf7f; display:flex; align-items:center; padding:0 4px; gap:6px; }
.count { background:#c9aa64; border-radius:3px; padding:1px 9px; margin-left:2px; height:19px; }
.pill { height:17px; border:1px solid #333; border-radius:9px; background:#cbcbcb; }
.name { height:23px; background:#afafaf; display:flex; align-items:center; gap:5px; padding:0 4px; }
.round { width:17px; height:17px; border-radius:50%; border:1px solid #222; background:#cbcbcb; }
.blue { background:#3f7de8; }
.files { display:grid; height:173px; padding-left:23px; border-bottom:1px solid #555; }
.files li { display:flex; align-items:center; gap:6px; }
.preview { padding:5px; }

.arr { flex:1; min-width:0; display:flex; border:2px solid #1c1c1c; border-right:0; border-radius:5px 0 0 5px; background:var(--grey); overflow:hidden; }
.bars text { fill:#262626; }
.zoomlabel { font-size:22px; fill:#5e5e5e; }
.locs text, .keys text { fill:#111; }
.notes text { fill:#fff; font-weight:600; }
.heads { flex:1; min-width:0; border-left:2px solid var(--frame); background:var(--frame); display:flex; flex-direction:column; gap:2px; overflow:hidden; }
.heads-top { height:57px; background:var(--grey); padding:11px 4px; }
.line { display:flex; gap:5px; }
.line .w37 { margin-right:9px; }
.l2 { margin-top:6px; gap:4px; }
.btn { height:17px; border:1px solid #2c2c2c; background-color:#d6d6d6; }
.btn.amber { background-color:var(--amber); }
.track { display:grid; grid-template-columns:133px 95px 1fr; column-gap:3px; height:46px; flex:none; }
.track.first { height:44px; }
.tn { display:flex; align-items:flex-start; gap:4px; padding:3px 0 0 2px; color:#1c3238; line-height:17px; position:relative; }
.first .tn { padding-top:1px; }
.child { margin-left:6px; }
.child::before { content:""; position:absolute; left:-6px; top:-2px; bottom:0; width:5px; background:var(--cyan); }
.c-cyan{background:var(--cyan)}.c-mauve{background:#b99eb9;color:#3b2c3b}.c-purple{background:#856bdb;color:#231748}.c-teal{background:#56bbad;color:#123a35}.c-mint{background:#dffde3;color:#2b3a2d}.c-ice{background:#d3f0f8;color:#25333a}.c-blue{background:#212c8f;color:#cdd4ff}.c-dark{background:#3b3b3b;color:#e2e2e2}.c-white{background:#fff;color:#111}
.io,.mx { background:var(--grey); padding:0 3px; display:flex; flex-direction:column; justify-content:center; gap:5px; }
.mx { padding-right:0; overflow:hidden; }
.mx > * { width:60px; flex:none; }
.slot { height:17px; border:1px solid #333; }
.sel { height:17px; border:1px solid #2c2c2c; padding:0 0 0 1px; min-width:0; width:100%; background:url("data:image/svg+xml,%3Csvg xmlns='http://www.w3.org/2000/svg' width='9' height='8'%3E%3Cpath d='M0 0h9L4.500 8z'/%3E%3C/svg%3E") right 2px center no-repeat #d6d6d6; }
.num { --c:var(--fill); --f:0%; height:17px; border:1px solid #2c2c2c; text-align:center; background:linear-gradient(90deg,var(--c) var(--f),#dcdcdc var(--f)); }
.num.or { --c:#eaae37; }
.cy { --f:100%; }
.r { text-align:right; padding-right:2px; }
.num.grey { background:#8d8d8d; }
.sliver { height:3px; }
.sliver .child::before { background:#d3f0f8; }
.ret { height:23px; }
.sliver + .ret { margin-top:1px; }
.ret .tn { gap:6px; font-weight:600; }
.ret .c-white { font-weight:500; gap:8px; }
.heads-foot { flex:1; background:var(--grey); padding:6px 0; display:flex; gap:4px; margin-top:-1px; }
.hbtn { margin-left:17px; }

.clipview { display:flex; gap:2px; margin-top:9px; height:291px; }
.props { width:354px; background:var(--grey); flex:none; display:flex; flex-direction:column; }
.cliptitle { height:23px; background:#212c8f; border-bottom:1px solid #555; }
.ptabs { display:flex; height:23px; border-bottom:2px solid #555; }
.ptabs button { border-right:1px solid #555; background:#8c8c8c; }
.ptabs .sel-tab, .etabs .sel-tab { background:#afafaf; color:#111; }
.p1{width:22px}.p2{width:112px}.p3{width:73px}.ptabs .p3:last-child{flex:1;border:0}
.pbody { display:flex; flex:1; }
.pcol { width:134px; border-right:1px solid #555; padding:4px 14px 0 0; }
.prow { display:flex; align-items:center; gap:5px; height:17px; }
.prow .num,.prow .sel { flex:1; width:auto; }
.cut { width:20px; flex:none; display:flex; justify-content:flex-end; }
.prow .cut .num { flex:none; width:60px; }
.r5 { margin-top:5px; }
.prow .round + .round { margin-left:-2px; }
.dim { color:#666; background:#a9a9a9; border-color:#555; }
.dup { width:180px; margin-left:-61px; padding-right:14px; }
.loopb { width:180px; margin-left:-61px; gap:4px; padding-right:17px; border-color:#8a6a20; }
.h1 { margin:5px 0 6px; }
.last-row { margin-top:22px; }
.stub { width:2px; height:17px; background:#444; }
.gcol { flex:1; padding:4px 13px 0; display:flex; flex-direction:column; }
.grow { display:flex; gap:5px; }
.seed { padding-left:14px; }
.gen { background:var(--black); border-radius:2px; margin-top:5px; height:127px; padding:5px 9px 0; }
.gl { display:grid; grid-template-columns:1fr auto 1fr; height:18px; color:#d8d8d8; }
.gl b { color:#f5c451; font-weight:500; }
.gl b:last-child { text-align:right; }
.gen svg { margin:1px 0 5px; overflow:visible; }
.vd { display:flex; justify-content:space-between; margin-top:10px; }
.vd label { width:91px; text-align:center; }
.vd .num { width:100%; display:block; }
.gcol hr { margin:20px 0 5px; }
.ag { display:flex; }

.editor { flex:1; min-width:0; background:var(--grey); display:flex; flex-direction:column; }
.etool { height:24px; border-bottom:2px solid #555; display:flex; align-items:center; padding:0 3px; }
.bar { width:1px; height:17px; background:#444; margin:0 6px; flex:none; }
.ml5 { margin-left:5px; }
.chk { display:flex; align-items:center; gap:4px; white-space:nowrap; }
.chk input { appearance:none; width:16px; height:17px; border:1px solid #333; background:url("data:image/svg+xml,%3Csvg xmlns='http://www.w3.org/2000/svg' width='12' height='12'%3E%3Cpath d='M1.500 6.500l3 4 6-9' fill='none' stroke='%23111' stroke-width='1.500'/%3E%3C/svg%3E") center no-repeat #b898f7; }
.etabs { display:flex; height:22px; margin-left:310px; border-left:1px solid #444; }
.etabs button { width:80px; border-right:1px solid #444; color:#2a2a2a; }
.roll { height:244px; overflow:hidden; }
.roll svg { overflow:visible; }
.vtool { flex:1; display:flex; align-items:center; padding:0 3px; }
.vtool .bar { margin:0 7px; }
.tri { margin:0 4px 0 6px; }
.vl { border-left:1px solid #555; padding:3px 0 3px 4px; margin-left:3px; }

.devices { display:flex; margin-top:11px; height:244px; }
.device { background:#b4b4b4; }
.device header { height:23px; display:flex; align-items:center; }
.meld { width:1103px; border-radius:0 4px 4px 0; flex:none; overflow:hidden; }
.meld header { background:#b1c8cc; }
.h-eng, .h-fil, .h-mix, .roar h4 { font-weight:600; }
.h-eng { width:325px; text-align:center; padding-right:43px; }
.tabA { width:110px; height:20px; align-self:flex-end; background:var(--black); color:var(--cyan); border-radius:3px 3px 0 0; font-weight:600; }
.tabg { height:16px; background:#8f8f8f; margin-left:3px; border-radius:2px; }
.h-fil { margin-left:150px; }
.h-mix { margin-left:66px; }
.lim { margin-left:11px; }
.led { width:9px; height:9px; border-radius:50%; background:#444; margin:0 8px 0 4px; flex:none; }
.meld header .round { margin-left:4px; }
.dbody { display:flex; gap:3px; height:218px; }
.col { display:grid; grid-template-rows:107px 108px; gap:3px; flex:none; }
.blk { background:var(--black); border-radius:2px; color:#d8d8d8; }
.pan { background:var(--grey); border-radius:2px; }
.c1 { width:64px; }
.eng { padding-top:4px; overflow:hidden; }
.e2 { padding-top:5px; }
.eng .sel { width:80px; margin-left:-21px; padding-left:22px; display:block; color:#111; }
.eng .cysel { background-color:var(--cyan); }
.eng .orsel { background-color:var(--amber); }
.eng svg { margin:12px 0 2px; }
.e2 svg { margin:10px 0 5px; }
.ct { display:flex; justify-content:space-between; padding-right:8px; margin-left:-11px; }
.cyan { color:var(--cyan); }.amb { color:var(--amber); }
.c2 { width:175px; }
.kn { display:flex; justify-content:center; padding-top:10px; }
.k2 { padding-top:11px; }
.knob { width:73px; display:flex; flex-direction:column; align-items:center; position:relative; white-space:nowrap; flex:none; }
.knob svg { width:50px; height:49px; }
.kn .knob svg { margin-top:3px; }
.knob circle,.vol circle { fill:none; stroke:#1a1a1a; stroke-width:2.5; transform:rotate(123deg); }
.knob .v,.vol .v { stroke:var(--cyan); }
.knob .o { stroke:var(--amber); }
.knob path,.vol path { stroke:#1a1a1a; stroke-width:2.5; }
.mod::before { content:""; position:absolute; width:8px; height:8px; border-radius:50%; background:#e25850; border:1px solid #222; left:11px; top:15px; }
.m2::before { left:11px; top:0; }
.m3::before { left:6px; top:13px; }
.ddot { position:absolute; width:7px; height:7px; border-radius:50%; background:#555; left:60px; top:20px; }
.c3 { width:516px; flex:none; }
.mtabs { height:25px; border-bottom:1px solid #3d3d3d; display:grid; grid-template-columns:56px 22px 4px 77px 21px 78px 84px 54px 88px; align-items:center; color:var(--cyan); }
.mtabs button { height:17px; font-weight:600; }
.ic-l { grid-column:2; border:1px solid var(--cyan); }
.mtabs .act { grid-column:4; background:var(--cyan); color:#123; font-weight:500; }
.mt1 { grid-column:6; }
.envs { display:flex; }
.env { width:259px; height:193px; border-right:1px solid #3d3d3d; }
.e-b { border:0; width:257px; }
.eh { display:flex; align-items:center; padding:0 10px 0 7px; height:28px; margin-bottom:-6px; }
.led2 { width:6px; height:6px; border-radius:50%; background:#484848; margin-left:8px; flex:none; }
.dd { color:var(--cyan); font-weight:600; padding-right:24px; background:url("data:image/svg+xml,%3Csvg xmlns='http://www.w3.org/2000/svg' width='7' height='4'%3E%3Cpath d='M0 0h7L3.500 4z' fill='%236fe7fc'/%3E%3C/svg%3E") right center no-repeat; }
.eh .dd { margin-left:auto; }
.prm { display:grid; grid-template-columns:repeat(4,60px); grid-template-rows:42px 40px; padding:4px 0 0 7px; border-top:1px solid #3d3d3d; }
.prm.p-b { padding-left:17px; }
dt,.g { color:#777; }
dt { height:17px; white-space:nowrap; }
dd { color:var(--cyan); font-weight:600; white-space:nowrap; }
.prm dd { padding-left:2px; font-weight:500; }
dd.pk { color:#f28088; }
dd.y { color:#f5c451; }
.md { position:relative; }
.md::before { content:""; position:absolute; width:6px; height:6px; border-radius:50%; background:#f04848; left:0; top:14px; }
.ini { position:relative; }
.ini::before { content:""; position:absolute; width:7px; height:7px; border:1px solid #888; left:-12px; top:5px; }
.c4 { width:149px; }
.fil { padding:4px 5px; }
.ft { display:flex; gap:5px; }
.fk { display:flex; justify-content:space-between; padding:0 9px 0 0; }
.fk .knob { margin-top:10px; }
.fn { width:50px; padding-top:6px; }
.fn label { display:flex; flex-direction:column; align-items:center; white-space:nowrap; margin-bottom:4px; }
.fn .num { width:50px; }
.c5 { width:108px; }
.mix { display:flex; padding:4px 5px; }
.ml { width:49px; }
.ml .num { width:48px; display:block; }
.sm { width:49px; }
.ml .knob { margin-top:10px; }
.knob.sm svg { width:40px; height:38px; }
.knob .f { fill:#1a1a1a; stroke:none; }
.mr { display:flex; flex-direction:column; align-items:center; width:54px; white-space:nowrap; }
.mr svg { margin:1px 0 -1px; }
.c6 { width:71px; flex:none; padding:4px 5px; }
.c6 .btn { width:62px; }
.c6 .num,.c6 .sel { width:62px; display:block; }
.c6 > .sel { margin-top:5px; }
.cybtn { background-color:var(--cyan); }
.c6 label { display:block; margin-top:4px; }
.c6 hr { margin:5px 0 0; width:62px; }
.vol { padding-top:6px; }
.vol div { display:flex; margin-top:1px; white-space:nowrap; }
.vol div span { margin:12px 0 0 -10px; }
.meter { margin:52px 2px 0 3px; }
.roar { flex:1; min-width:0; overflow:hidden; border-radius:4px 0 0 4px; padding-left:3px; }
.rt { display:flex; align-items:center; width:191px; gap:5px; flex:none; }
.power { width:17px; height:17px; border-radius:50%; background:var(--amber); border:1px solid #333; margin-left:1px; }
.rtab { width:118px; height:17px; background:#8d8d8d; gap:7px; margin-right:3px; border-radius:3px; }
.rtab.cur { height:20px; align-self:flex-end; background:var(--grey); border-radius:3px 3px 0 0; }
.sq { width:12px; height:12px; border:1px solid #333; background:var(--amber); }
.sq.c { background:var(--cyan); }.sq.p { background:#f28088; }
.strip { width:24px; background:#8f8f8f; display:flex; flex-direction:column; align-items:center; padding-top:3px; gap:4px; flex:none; }
.vt { writing-mode:vertical-rl; transform:rotate(180deg); }
.vt1 { margin-top:17px; }
.vt2 { margin-top:9px; }
.strip .led2 { margin:3px 0 0; width:9px; height:9px; }
.r1,.r2 { grid-template-rows:92px 123px; }
.r1 { width:161px; }
.rd { display:flex; padding:5px 8px 0 1px; justify-content:space-between; }
.tn2 { width:72px; }
.tt { display:flex; justify-content:space-between; height:19px; align-items:flex-start; padding-left:1px; }
.tn2 .num { width:72px; display:block; }
.tn2 .tt .btn { margin-top:2px; }
.rb { display:grid; grid-template-rows:77px 46px; }
.rr { display:grid; grid-template-columns:124px 1fr; border-bottom:1px solid #3d3d3d; }
.rl { padding:4px 0 0 11px; border-right:1px solid #3d3d3d; display:flex; flex-direction:column; align-items:flex-start; }
.rl svg { height:32px; }
.dd.y { color:#f5c451; padding-right:15px; background-image:url("data:image/svg+xml,%3Csvg xmlns='http://www.w3.org/2000/svg' width='7' height='4'%3E%3Cpath d='M0 0h7L3.500 4z' fill='%23f5c451'/%3E%3C/svg%3E"); }
.hml { padding:9px 0 0 8px; color:#666; display:flex; flex-direction:column; gap:6px; font-size:12px; background:linear-gradient(90deg,#444 2px,#0000 2px 4px,#444 4px) 20px 50%/6px 60px no-repeat; }
.lh { display:grid; grid-template-columns:62px 1fr; padding:6px 0 0 11px; }
.r2 { flex:1; min-width:0; grid-template-columns:100%; }
.bd { display:flex; padding-top:5px; overflow:hidden; }
.k-a { margin-left:41px; }
.k-b { margin:9px 0 0 41px; }
.knob.k-b svg { height:31px; }
.dash { width:8px; height:1px; background:#444; margin:40px 7px 0 -7px; flex:none; }
.pbtn { width:30px; margin-top:32px; justify-content:flex-start; padding-left:4px; }
.bb { display:flex; overflow:hidden; }
.sh { width:181px; border-right:1px solid #3d3d3d; flex:none; }
.lh.s1,.lh.s2 { padding:0 0 0 7px; grid-template-columns:96px 1fr; margin-top:-1px; }
.lh.s2 { grid-template-columns:73px 1fr; }
.chk2 dt { padding-left:17px; background:linear-gradient(var(--cyan),var(--cyan)) 0 3px/12px 12px no-repeat; }
.dd.c { width:68px; }
.s2 .dd.c { width:53px; }

.status { display:flex; margin-top:11px; height:25px; }
.info { width:1048px; flex:none; background:var(--grey); border-radius:0 4px 4px 0; display:flex; align-items:center; gap:16px; white-space:nowrap; }
.s0 { margin-left:-4px; }
.up { width:26px; background:var(--amber); border-radius:3px 0 0 3px; margin-left:12px; }
.over { width:257px; height:27px; margin:-1px 0 0 2px; border:2px solid #111; border-radius:5px; background:#a9a9a9; overflow:hidden; flex:none; }
.bm { background:var(--grey); width:79px; padding:5px 0 0 7px; font-weight:600; white-space:nowrap; flex:none; }
.chain { margin-top:-1px; }
```
